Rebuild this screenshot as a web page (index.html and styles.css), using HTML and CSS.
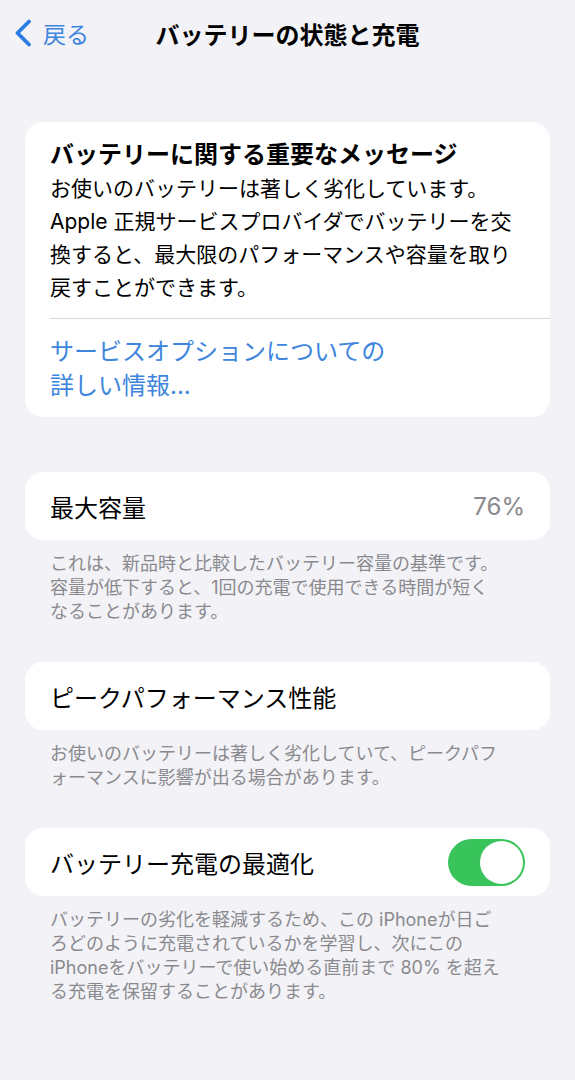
FILE: index.html
```html
<!DOCTYPE html>
<html lang="ja">
<head>
    <meta charset="UTF-8">
    <title>バッテリーの状態と充電</title>
    <meta name="viewport" content="width=device-width, initial-scale=1.0">
    <link rel="stylesheet" href="styles.css">
</head>
<body>
    <header class="nav">
        <a class="back" href="#">
            <svg class="chevron" width="18" height="28" viewBox="0 0 18 28">
                <path d="M15 2.5 L3.5 14 L15 25.5" fill="none" stroke="#2a7be4" stroke-width="3.8" stroke-linecap="round" stroke-linejoin="round"/>
            </svg>
            <span>戻る</span>
        </a>
        <h1 class="title">バッテリーの状態と充電</h1>
        <span></span>
    </header>

    <main class="content">
        <!-- 重要なメッセージ -->
        <section class="card message">
            <div class="message-body">
                <h2>バッテリーに関する重要なメッセージ</h2>
                <p>お使いのバッテリーは著しく劣化しています。<br>Apple 正規サービスプロバイダでバッテリーを交<br>換すると、最大限のパフォーマンスや容量を取り<br>戻すことができます。</p>
            </div>
            <a class="message-link" href="#">サービスオプションについての<br>詳しい情報...</a>
        </section>

        <section class="group">
            <div class="card row">
                <span>最大容量</span>
                <span class="value">76%</span>
            </div>
            <p class="note">これは、新品時と比較したバッテリー容量の基準です。<br>容量が低下すると、1回の充電で使用できる時間が短く<br>なることがあります。</p>
        </section>

        <section class="group">
            <div class="card row">
                <span>ピークパフォーマンス性能</span>
            </div>
            <p class="note">お使いのバッテリーは著しく劣化していて、ピークパフ<br>ォーマンスに影響が出る場合があります。</p>
        </section>

        <section class="group">
            <div class="card row">
                <span>バッテリー充電の最適化</span>
                <span class="toggle on"><span class="knob"></span></span>
            </div>
            <p class="note">バッテリーの劣化を軽減するため、この iPhoneが日ご<br>ろどのように充電されているかを学習し、次にこの<br>iPhoneをバッテリーで使い始める直前まで 80% を超え<br>る充電を保留することがあります。</p>
        </section>
    </main>
</body>
</html>
```

FILE: styles.css
```css
body {
    margin: 0;
    background-color: #f2f2f7;
    color: #000000;
    font-family: Inter, "Noto Sans CJK JP", sans-serif;
}
.nav {
    height: 66px;
    display: grid;
    grid-template-columns: 1fr auto 1fr;
    align-items: center;
}
.back {
    display: flex;
    align-items: center;
    gap: 11px;
    padding-left: 14px;
    color: #3d85dd;
    text-decoration: none;
    font-size: 23px;
}
.title {
    margin: 0;
    font-size: 24px;
    font-weight: 700;
}
.content {
    padding: 56px 25px 0;
}
.card {
    background: #ffffff;
    border-radius: 18px;
}
.message {
    padding-left: 25px;
}
.message-body {
    padding: 18px 25px 14px 0;
    border-bottom: 1px solid #d9d9de;
}
.message h2 {
    margin: 0 0 2px;
    font-size: 24px;
    line-height: 30px;
    font-weight: 700;
}
.message p {
    margin: 0;
    font-size: 21px;
    line-height: 33px;
    white-space: nowrap;
}
.message-link {
    display: block;
    padding: 16px 0 14px;
    color: #3d85dd;
    text-decoration: none;
    font-size: 24px;
    line-height: 34px;
}
.group {
    margin-top: 55px;
}
.group + .group {
    margin-top: 38px;
}
.row {
    height: 68px;
    padding: 0 25px;
    display: flex;
    align-items: center;
    justify-content: space-between;
    font-size: 24px;
}
.value {
    color: #8a8a8e;
}
.note {
    margin: 12px 0 0;
    padding: 0 25px;
    color: #8a8a8e;
    font-size: 18px;
    line-height: 24px;
    white-space: nowrap;
}
.toggle {
    position: relative;
    width: 77px;
    height: 47px;
    border-radius: 24px;
    background: #38c45b;
}
.toggle .knob {
    position: absolute;
    top: 2px;
    right: 2px;
    width: 43px;
    height: 43px;
    border-radius: 50%;
    background: #ffffff;
}
```
